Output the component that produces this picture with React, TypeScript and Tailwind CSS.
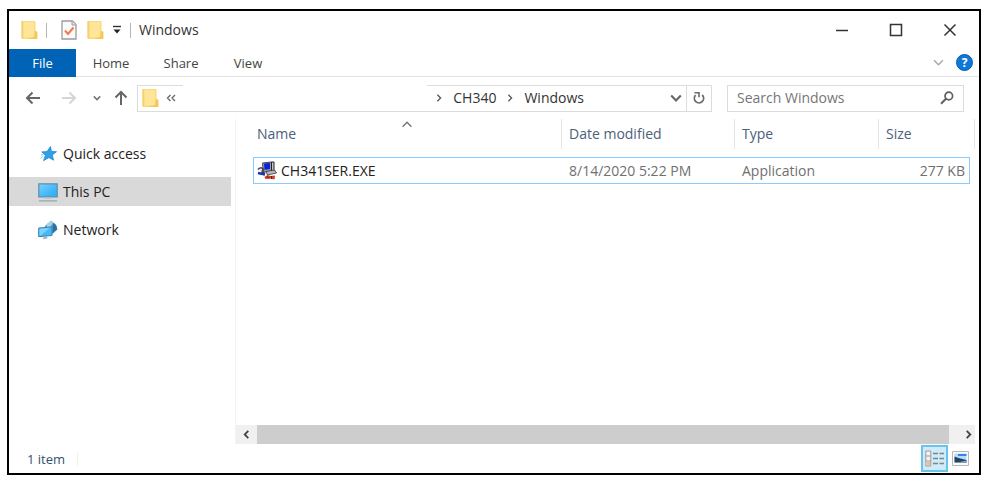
import type { ReactNode } from 'react';

function Folder() {
  return (
    <svg width="17" height="20" viewBox="0 0 17 20" aria-hidden="true" className="shrink-0">
      <path d="M.5 1h13q1 0 1 1v9h.8q1 0 1 1v7H2.500l-2-.8z" fill="#f9da7c" />
      <path d="M2.500 2h10.500v15.500H2.500z" fill="#ffe597" />
      <path d="M.5 1h1.500v18l-1.500-.8z" fill="#f5d06a" />
      <path d="M14 11.500h1.500q.8 0 .8.800v6.700H6l7-2z" fill="#f2c95a" />
    </svg>
  );
}

function CheckedDocument() {
  return (
    <svg width="16" height="20" viewBox="0 0 16 20" aria-hidden="true">
      <path d="M1 1h10.500L15 4.500V19H1z" fill="#fafafa" stroke="#9c9c9c" strokeWidth="1.300" />
      <path d="M11 1v4h4" fill="#e4e4e4" stroke="#9c9c9c" />
      <path d="M4 10.500l3 3.500 5.500-6.500" fill="none" stroke="#ee7a4a" strokeWidth="2" />
    </svg>
  );
}

type ChevronProps = { direction: 'up' | 'down' | 'left' | 'right'; width: number; stroke: string; weight: number };

const chevronPaths = {
  up: 'M1 7l4-4 4 4',
  down: 'M1 3l4 4 4-4',
  left: 'M7 1L3 5l4 4',
  right: 'M3 1l4 4-4 4',
};

function Chevron({ direction, width, stroke, weight }: ChevronProps) {
  return (
    <svg width={width} height={width} viewBox="0 0 10 10" aria-hidden="true" className="shrink-0">
      <path d={chevronPaths[direction]} fill="none" stroke={stroke} strokeWidth={weight} />
    </svg>
  );
}

function Arrow({ path, stroke }: { path: string; stroke: string }) {
  return (
    <svg width="16" height="16" viewBox="0 0 16 16" aria-hidden="true">
      <path d={path} fill="none" stroke={stroke} strokeWidth="2" />
    </svg>
  );
}

function Star() {
  return (
    <svg width="20" height="20" viewBox="0 0 20 20" aria-hidden="true">
      <path d="M12.500 2.500l.9 5 5.100.2-4.200 3.200 1.200 5.300-4.500-2.600-5.500 3 2-5.400-3.700-3.300 5.200-.3z" fill="#2ea0ea" stroke="#1c86cf" strokeWidth=".8" />
      <path d="M2.500 14.500l3-2.500M3 11l2.500-.5" stroke="#8ecbf3" />
    </svg>
  );
}

function Monitor() {
  return (
    <svg width="20" height="20" viewBox="0 0 20 20" aria-hidden="true">
      <defs>
        <linearGradient id="screen" x1="0" y1="0" x2="1" y2="1">
          <stop offset="0" stopColor="#7fd4fd" />
          <stop offset=".5" stopColor="#4cbcfa" />
          <stop offset="1" stopColor="#2aa9f5" />
        </linearGradient>
      </defs>
      <path d="M.8 1.800h18.400v13H.8z" fill="url(#screen)" stroke="#5b8fae" strokeWidth="1.200" />
      <path d="M7 15.400h6l1 1.600H6z" fill="#b9c9d3" />
      <path d="M1 18.900h18" stroke="#8fa5b5" strokeWidth="1.200" />
    </svg>
  );
}

function NetworkGlobe() {
  return (
    <svg width="20" height="20" viewBox="0 0 20 20" aria-hidden="true">
      <path d="M13 .8l5 3.700 1.500 5-5 4.500-7-2-.5-6z" fill="#5a9cc4" />
      <path d="M9 3.500L13 1l2 1.500-2 3.500-4 2z" fill="#a9d2e8" />
      <path d="M15 3l3.500 3 .5 3.500-4.500 3.500z" fill="#2f6f9c" />
      <path d="M.7 8l13.300-1v8.500L.7 16.700z" fill="#45b9f8" stroke="#3c82ad" />
      <path d="M1.500 8.700l10.500-.9-9 7.500-1.500.2z" fill="#7fd2fb" />
      <path d="M6 16.800l3-.2.500 2-5 .7z" fill="#9db4c2" />
    </svg>
  );
}

function InstallerIcon() {
  return (
    <svg width="20" height="20" viewBox="0 0 20 20" aria-hidden="true" className="shrink-0">
      <path d="M5.500 2l9-1v9l-8 1z" fill="#9da3b0" stroke="#444" />
      <path d="M7 2.500l6-.6v6.200L7.500 9z" fill="#0c22d8" />
      <path d="M14.500 1h2.500v9h-2.500z" fill="#c4c6ca" stroke="#222" />
      <path d="M9 10.500l8.500-1.500 2 3-9 2z" fill="#b4b8bc" stroke="#333" strokeWidth=".8" />
      <path d="M1 8.500q2.500-3 5-.5l-1 3 3 1.500" fill="#e6e8ec" stroke="#444" strokeWidth="1.500" />
      <path d="M1 12l7 1.500" stroke="#1a31b8" strokeWidth="2.600" />
      <path d="M7.500 16l3-2 3 1 4.500-.5-.5 4-4-1-5 .5z" fill="#cf3d22" />
      <path d="M10 15.500l2 2M14.500 15v3" stroke="#641d12" />
    </svg>
  );
}

function Refresh() {
  return (
    <svg width="14" height="14" viewBox="0 0 14 14" aria-hidden="true">
      <path d="M10.200 4A4.600 4.600 0 1 1 3.600 4.200" fill="none" stroke="#6b6b6b" strokeWidth="1.800" />
      <path d="M2.500 1.800H7V6.300" fill="none" stroke="#6b6b6b" strokeWidth="1.600" />
    </svg>
  );
}

function Magnifier() {
  return (
    <svg width="16" height="16" viewBox="0 0 16 16" aria-hidden="true">
      <circle cx="9.800" cy="6" r="3.800" fill="none" stroke="#5f5f5f" strokeWidth="1.700" />
      <path d="M7 8.800L2 13.700" stroke="#5f5f5f" strokeWidth="2" />
    </svg>
  );
}

function TitleBar() {
  return (
    <header className="flex h-[38px] items-center pl-3 pr-[22px]">
      <Folder />
      <span className="ml-2 h-[15px] w-px bg-[#b5b5b5]" />
      <button aria-label="Properties" className="ml-[14px]"><CheckedDocument /></button>
      <button aria-label="New folder" className="ml-[10px]"><Folder /></button>
      <button aria-label="Customize Quick Access Toolbar" className="ml-2">
        <svg width="10" height="10" viewBox="0 0 10 10" aria-hidden="true">
          <path d="M1 1.500h8" stroke="#333" strokeWidth="1.400" />
          <path d="M1.500 4.500h7L5 8.500z" fill="#222" />
        </svg>
      </button>
      <span className="ml-2 h-[15px] w-px bg-[#b5b5b5]" />
      <h1 className="ml-2 text-[#333]">Windows</h1>
      <div className="ml-auto flex items-center gap-10">
        <button aria-label="Minimize">
          <svg width="14" height="14" viewBox="0 0 14 14" aria-hidden="true"><path d="M1 7.500h12" stroke="#333" strokeWidth="1.500" /></svg>
        </button>
        <button aria-label="Maximize">
          <svg width="14" height="14" viewBox="0 0 14 14" aria-hidden="true"><path d="M1.500 1.500h11v11h-11z" fill="none" stroke="#333" strokeWidth="1.500" /></svg>
        </button>
        <button aria-label="Close">
          <svg width="14" height="14" viewBox="0 0 14 14" aria-hidden="true"><path d="M1.500 1.500l11 11M12.500 1.500l-11 11" stroke="#333" strokeWidth="1.500" /></svg>
        </button>
      </div>
    </header>
  );
}

function RibbonTabs() {
  return (
    <nav className="flex h-7 items-center border-b border-[#e2e2e2] pr-[6px] text-[13px] text-[#444]">
      <button className="h-7 w-[67px] bg-[#0063b5] font-medium text-white">File</button>
      <button className="w-[70px]">Home</button>
      <button className="w-[70px]">Share</button>
      <button className="w-16">View</button>
      <div className="ml-auto flex items-center gap-3">
        <button aria-label="Expand the ribbon"><Chevron direction="down" width={11} stroke="#a8a8a8" weight={1.4} /></button>
        <button aria-label="Help" className="flex size-[17px] items-center justify-center rounded-full border border-[#0a5cab] bg-[#0d78d7] text-[12px] font-bold leading-none text-white">?</button>
      </div>
    </nav>
  );
}

function AddressRow() {
  return (
    <div className="flex h-[42px] items-center pl-4 pr-[15px]">
      <button aria-label="Back"><Arrow path="M15 8H2M7.500 2.500L2 8l5.500 5.500" stroke="#666" /></button>
      <button aria-label="Forward" className="ml-5"><Arrow path="M1 8h13M8.500 2.500L14 8l-5.500 5.500" stroke="#d5d5d5" /></button>
      <button aria-label="Recent locations" className="ml-4"><Chevron direction="down" width={8} stroke="#777" weight={2} /></button>
      <button aria-label="Up" className="ml-3"><Arrow path="M8 15V2M2.500 7.500L8 2l5.500 5.500" stroke="#666" /></button>
      <div className="ml-2 flex h-[27px] min-w-0 flex-1 items-center border border-[#dcdcdc] pl-1 text-[#333]">
        <Folder />
        <button aria-label="Earlier folders" className="flex w-6 items-center justify-center">
          <svg width="10" height="8" viewBox="0 0 10 8" aria-hidden="true"><path d="M4.500 1l-3 3 3 3M9 1L6 4l3 3" fill="none" stroke="#666" strokeWidth="1.300" /></svg>
        </button>
        <span className="-mt-px min-w-0 flex-1 self-stretch bg-white" />
        <span className="flex items-center gap-[10px] pl-2">
          <Chevron direction="right" width={8} stroke="#555" weight={1.6} />
          <button>CH340</button>
          <Chevron direction="right" width={8} stroke="#555" weight={1.6} />
          <button>Windows</button>
        </span>
        <button aria-label="Previous locations" className="ml-[86px]"><Chevron direction="down" width={12} stroke="#666" weight={1.8} /></button>
        <button aria-label="Refresh" className="ml-1 flex h-[25px] w-[25px] items-center justify-center border-l border-[#dcdcdc]"><Refresh /></button>
      </div>
      <label className="ml-[15px] flex h-[27px] w-[237px] items-center border border-[#dcdcdc] pl-2 pr-2">
        <input type="search" aria-label="Search Windows" placeholder="Search Windows" className="min-w-0 flex-1 pl-px outline-none placeholder:text-[#767676]" />
        <Magnifier />
      </label>
    </div>
  );
}

function SidebarItem({ icon, label, selected = false }: { icon: ReactNode; label: string; selected?: boolean }) {
  return (
    <button className={`flex h-[29px] items-center gap-[5px] pl-[29px] text-left text-[#222] ${selected ? 'bg-[#d9d9d9]' : ''}`}>
      {icon}
      {label}
    </button>
  );
}

function Sidebar() {
  return (
    <aside className="flex w-[227px] shrink-0 flex-col gap-[9px] border-r border-[#f3f3f3] pr-1 pt-5">
      <SidebarItem icon={<Star />} label="Quick access" />
      <SidebarItem icon={<Monitor />} label="This PC" selected />
      <SidebarItem icon={<NetworkGlobe />} label="Network" />
    </aside>
  );
}

function ColumnHeader({ label, first = false }: { label: string; first?: boolean }) {
  return (
    <th scope="col" className="p-0 pb-2 text-left font-normal text-[#4c607a]">
      <div className={`relative flex h-[30px] items-center ${first ? 'pl-1' : 'border-l border-[#e5e5e5] pl-[7px]'}`}>
        {label}
        {first && (
          <span className="absolute left-1/2 top-0 -translate-x-1/2">
            <Chevron direction="up" width={11} stroke="#777" weight={1.3} />
          </span>
        )}
      </div>
    </th>
  );
}

function FileTable() {
  return (
    <table className="ml-[17px] table-fixed border-separate border-spacing-0">
      <colgroup>
        <col />
        <col className="w-[173px]" />
        <col className="w-36" />
        <col className="w-[92px]" />
        <col className="w-[5px]" />
      </colgroup>
      <thead>
        <tr>
          <ColumnHeader label="Name" first />
          <ColumnHeader label="Date modified" />
          <ColumnHeader label="Type" />
          <ColumnHeader label="Size" />
          <td className="p-0 pb-2"><div className="h-[30px] border-r border-[#e5e5e5]" /></td>
        </tr>
      </thead>
      <tbody>
        <tr className="h-[27px] text-[#707070]">
          <td className="border-y border-l border-solid border-y-[#8ccbff] border-l-[#8ccbff] p-0 pl-[3px] text-[#222]">
            <span className="flex items-center gap-1"><InstallerIcon />CH341SER.EXE</span>
          </td>
          <td className="border-y border-solid border-y-[#8ccbff] p-0 pl-2">8/14/2020 5:22 PM</td>
          <td className="border-y border-solid border-y-[#8ccbff] p-0 pl-2">Application</td>
          <td className="border-y border-r border-solid border-y-[#8ccbff] border-r-[#8ccbff] p-0 pr-1 text-right">277 KB</td>
          <td />
        </tr>
      </tbody>
    </table>
  );
}

function HorizontalScrollbar() {
  return (
    <div className="mt-auto flex h-[19px] bg-[#f0f0f0]">
      <button aria-label="Scroll left" className="flex w-[21px] items-center justify-center"><Chevron direction="left" width={9} stroke="#444" weight={2} /></button>
      <div className="flex-1 bg-[#cdcdcd]" />
      <button aria-label="Scroll right" className="flex w-[26px] items-center justify-center pl-3"><Chevron direction="right" width={9} stroke="#444" weight={2} /></button>
    </div>
  );
}

function StatusBar() {
  return (
    <footer className="flex h-[29px] items-center pl-[18px] pr-[10px] text-[13px]">
      <span className="text-[#34506e]">1 item</span>
      <span className="ml-3 h-[14px] w-px bg-[#f0f0f0]" />
      <div className="ml-auto flex items-center gap-1">
        <button aria-label="Details view" className="flex h-[27px] w-[27px] items-center justify-center border-2 border-[#6ac3ea] bg-[#cdebf9]">
          <svg width="20" height="17" viewBox="0 0 20 17" aria-hidden="true">
            <path d="M.8 1h5v15h-5z" fill="#f4f1ee" stroke="#a39a94" />
            <path d="M1 6h5M1 11h5" stroke="#a39a94" />
            <path d="M2 12h3v3H2z" fill="#efbd87" />
            <path d="M8 3.500h5M14.500 3.500h4.500M8 8.500h5M14.500 8.500h4.500M8 13.500h5M14.500 13.500h4.500" stroke="#7d868c" strokeWidth="1.600" />
          </svg>
        </button>
        <button aria-label="Large icons view">
          <svg width="17" height="15" viewBox="0 0 17 15" aria-hidden="true">
            <path d="M.5.5h16v14H.5z" fill="#fafafa" stroke="#b8b8b8" />
            <path d="M2.500 2.500h12v9h-12z" fill="#b5dcf8" />
            <path d="M6 3h8.500v2H6z" fill="#3c7ff0" />
            <path d="M2.500 5.500l4 1.500 8 2v2.500h-12z" fill="#27435c" />
            <path d="M9 10.500l5.500-1v2H8z" fill="#6fa6cf" />
          </svg>
        </button>
      </div>
    </footer>
  );
}

export default function App() {
  return (
    <div className="flex h-screen flex-col bg-white px-[7px] pb-2 pt-[9px] font-['Open_Sans','Noto_Sans',sans-serif] text-[14px] leading-5">
      <main className="flex min-h-0 flex-1 flex-col border-2 border-black bg-white">
        <TitleBar />
        <RibbonTabs />
        <AddressRow />
        <div className="flex min-h-0 flex-1">
          <Sidebar />
          <section aria-label="Files" className="flex min-w-0 flex-1 flex-col pr-1">
            <FileTable />
            <HorizontalScrollbar />
          </section>
        </div>
        <StatusBar />
      </main>
    </div>
  );
}
